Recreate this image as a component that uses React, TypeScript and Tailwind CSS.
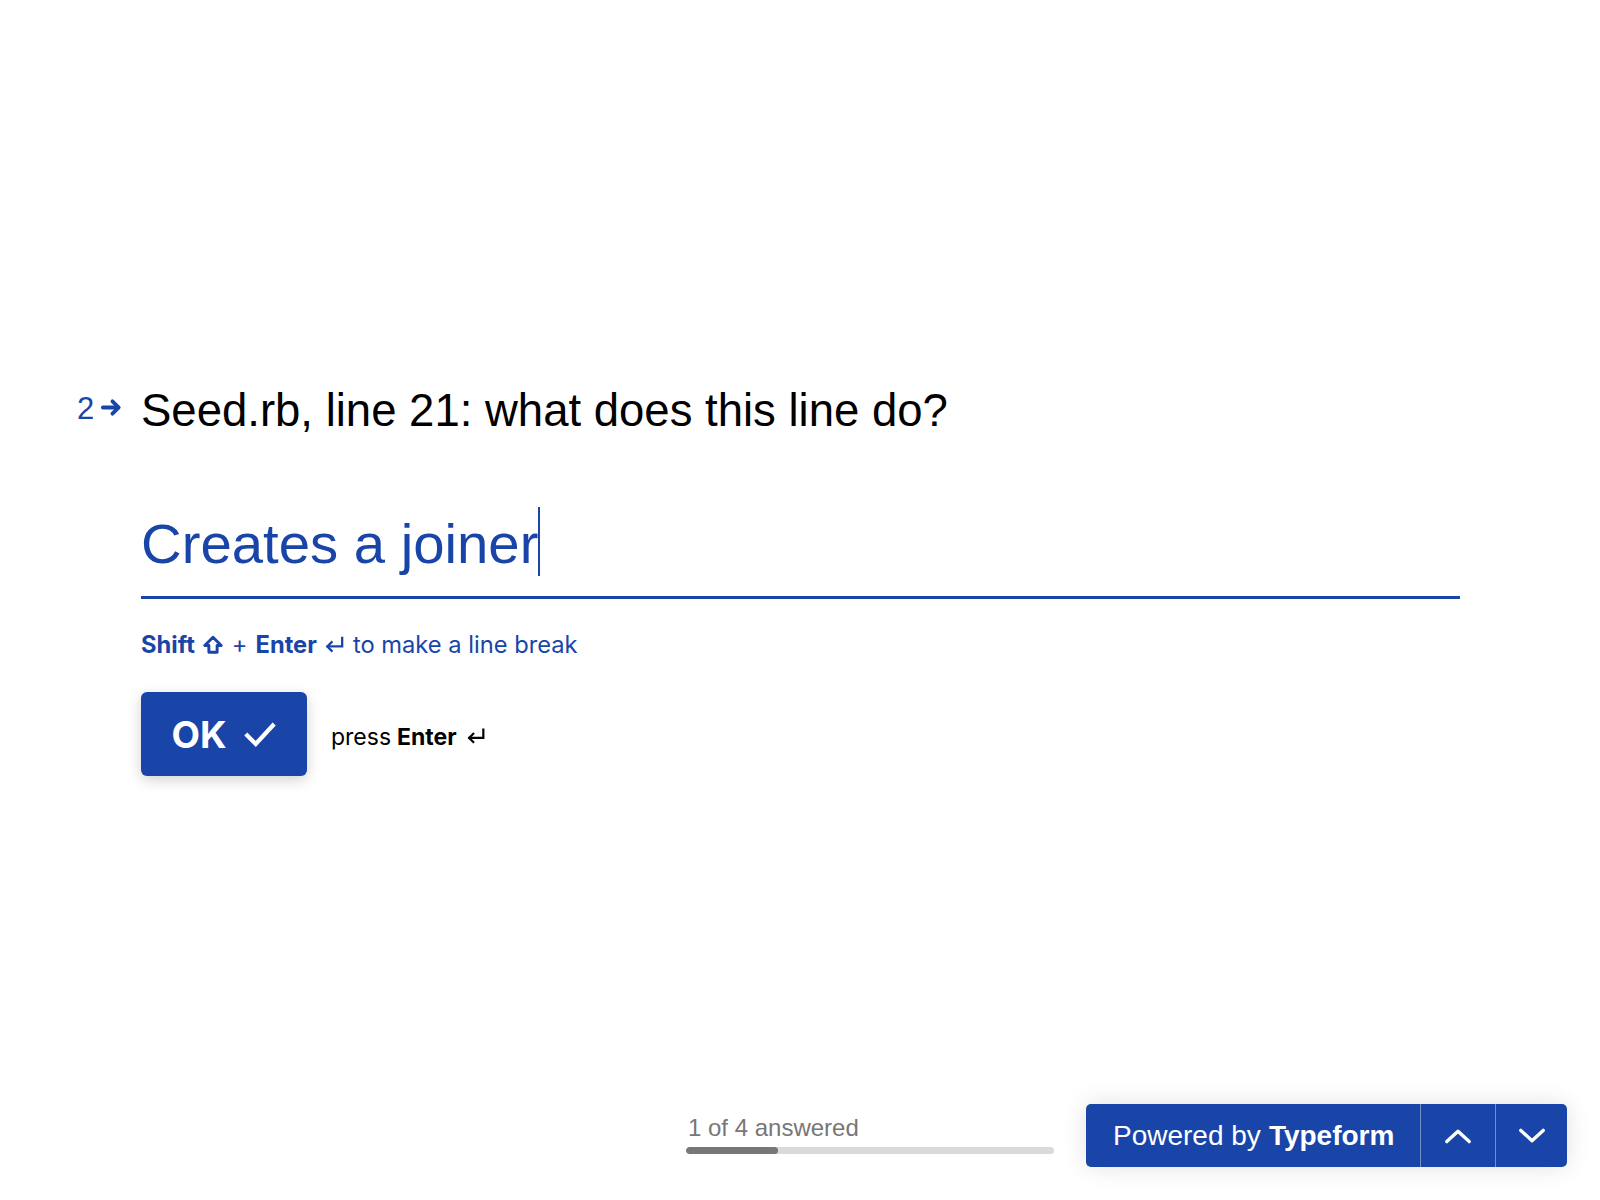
import React from 'react';

const BLUE = 'text-[#1945a8]';

const ReturnIcon: React.FC<{ className?: string }> = ({ className }) => (
  <svg viewBox="0 0 24 24" fill="none" stroke="currentColor" strokeWidth={2.4} strokeLinecap="square" className={className}>
    <path d="M20 4v9H5" />
    <path d="M9 8.5L4.5 13 9 17.5" />
  </svg>
);

const ShiftIcon: React.FC<{ className?: string }> = ({ className }) => (
  <svg viewBox="0 0 24 24" fill="none" stroke="currentColor" strokeWidth={3.2} strokeLinejoin="round" className={className}>
    <path d="M12 3.5L3 12.5H7.5V20H16.5V12.5H21Z" />
  </svg>
);

const ArrowIcon: React.FC<{ className?: string }> = ({ className }) => (
  <svg viewBox="0 0 24 24" fill="none" stroke="currentColor" strokeWidth={4} strokeLinecap="round" strokeLinejoin="round" className={className}>
    <path d="M3 12h16" />
    <path d="M13 5.5L19.5 12 13 18.5" />
  </svg>
);

const CheckIcon: React.FC<{ className?: string }> = ({ className }) => (
  <svg viewBox="0 0 24 24" fill="none" stroke="currentColor" strokeWidth={3} strokeLinecap="square" className={className}>
    <path d="M3 13l6 6L21 6" />
  </svg>
);

const Chevron: React.FC<{ up?: boolean }> = ({ up }) => (
  <svg viewBox="0 0 30 16" fill="none" stroke="white" strokeWidth={3.6} strokeLinecap="round" strokeLinejoin="round" className="w-[28px] h-[16px]">
    {up ? <path d="M3 14L15 3l12 11" /> : <path d="M3 2l12 11L27 2" />}
  </svg>
);

const App: React.FC = () => {
  return (
    <div className="min-h-screen flex flex-col bg-white font-['Liberation_Sans',Arial,sans-serif]">
      <main className="flex-1 pt-[383px] pl-[77px] pr-[140px]">
        <div className="flex items-start">
          <div className={`w-[64px] h-[55px] flex items-center gap-[6px] ${BLUE}`}>
            <span className="text-[31px] leading-none -mt-[4px]">2</span>
            <ArrowIcon className="w-[23px] h-[23px] -mt-[6px]" />
          </div>

          <div className="flex-1">
            <h1 className="text-[45.5px] leading-[55px] text-black">Seed.rb, line 21: what does this line do?</h1>

            <div className="mt-[77px] pb-[20px] border-b-[3px] border-[#1945a8]">
              <div className="flex items-start">
                <span className={`text-[56.3px] leading-[57px] ${BLUE}`}>Creates a joiner</span>
                <span className="w-[2px] h-[69px] -mt-[8px] bg-[#1945a8]" />
              </div>
            </div>

            <p className={`mt-[32px] flex items-center text-[23.7px] leading-[28px] font-['Inter',sans-serif] ${BLUE}`}>
              <b className="font-bold">Shift</b>
              <ShiftIcon className="w-[22px] h-[22px] ml-[7px]" />
              <span className="mx-[8px]">+</span>
              <b className="font-bold">Enter</b>
              <ReturnIcon className="w-[23px] h-[23px] ml-[6px]" />
              <span className="ml-[7px]">to make a line break</span>
            </p>

            <div className="mt-[33px] flex items-center">
              <button className="w-[166px] h-[84px] rounded-[6px] bg-[#1945a8] text-white shadow-[0_4px_14px_rgba(0,0,0,0.18)] flex items-center justify-center gap-[16px]">
                <span className="text-[37px] font-bold font-['Inter',sans-serif] leading-none">OK</span>
                <CheckIcon className="w-[34px] h-[34px]" />
              </button>
              <span className="ml-[24px] mt-[6px] flex items-center text-[23px] text-black font-['Inter',sans-serif]">
                press <b className="font-bold ml-[6px]">Enter</b>
                <ReturnIcon className="w-[22px] h-[22px] ml-[8px]" />
              </span>
            </div>
          </div>
        </div>
      </main>

      <footer className="flex items-end justify-end gap-[32px] pr-[33px] pb-[33px]">
        <div className="w-[368px] mb-[13px]">
          <p className="pl-[2px] text-[24px] leading-[28px] text-[#777777]">1 of 4 answered</p>
          <div className="mt-[5px] h-[7px] rounded-full bg-[#dadada] overflow-hidden">
            <div className="h-full w-1/4 bg-[#777777] rounded-full" />
          </div>
        </div>

        <div className="h-[63px] flex rounded-[5px] bg-[#1945a8] text-white shadow-[0_0_24px_rgba(0,0,0,0.12)]">
          <div className="w-[334px] flex items-center pl-[27px] text-[28px]">
            Powered by <b className="font-bold ml-[8px]">Typeform</b>
          </div>
          <button className="w-[75px] flex items-center justify-center border-l border-white/40">
            <Chevron up />
          </button>
          <button className="w-[72px] flex items-center justify-center border-l border-white/40">
            <Chevron />
          </button>
        </div>
      </footer>
    </div>
  );
};

export default App;
